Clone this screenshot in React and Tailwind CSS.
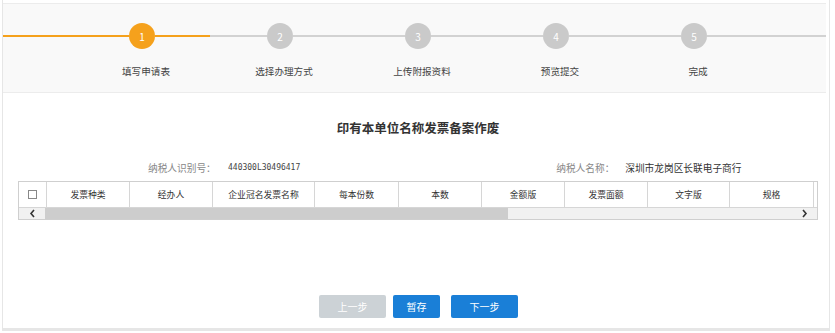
import React from "react";

const F = { fontFamily: '"Noto Sans CJK SC", "Noto Sans", sans-serif' };

function Circle({ n, active }) {
  return (
    <div
      className={`w-[26px] h-[26px] rounded-full flex items-center justify-center text-[10px] text-white shrink-0 ${
        active ? "bg-[#f5a11c]" : "bg-[#cacaca]"
      }`}
    >
      {n}
    </div>
  );
}

const cols = [
  { w: "w-[83px]", t: "发票种类" },
  { w: "w-[83px]", t: "经办人" },
  { w: "w-[102px]", t: "企业冠名发票名称" },
  { w: "w-[84px]", t: "每本份数" },
  { w: "w-[83px]", t: "本数" },
  { w: "w-[83px]", t: "金额版" },
  { w: "w-[83px]", t: "发票面额" },
  { w: "w-[82px]", t: "文字版" },
  { w: "w-[84px]", t: "规格" },
];

export default function App() {
  return (
    <div className="w-[835px] h-[333px] bg-white overflow-hidden" style={F}>
      <div className="ml-[2px] w-[828px] h-[331px] border-l border-r border-b-[3px] border-[#e6e6e6] pt-[3px] flex flex-col">
        {/* stepper */}
        <div className="h-[90px] bg-[#f9f9f9] border-t border-b border-[#ececec] mr-[3px] pt-[19px]">
          <div className="flex items-center h-[26px]">
            <div className="h-[2px] w-[126px] bg-[#f5a11c]" />
            <Circle n="1" active />
            <div className="h-[2px] w-[55px] bg-[#f5a11c]" />
            <div className="h-[2px] w-[57px] bg-[#d2d2d2]" />
            <Circle n="2" />
            <div className="h-[2px] w-[112px] bg-[#d2d2d2]" />
            <Circle n="3" />
            <div className="h-[2px] w-[112px] bg-[#d2d2d2]" />
            <Circle n="4" />
            <div className="h-[2px] w-[112px] bg-[#d2d2d2]" />
            <Circle n="5" />
            <div className="h-[2px] flex-1 bg-[#d2d2d2]" />
          </div>
          <div className="flex pl-[74px] mt-[15px] text-[9.6px] text-[#444] leading-[14px]">
            {["填写申请表", "选择办理方式", "上传附报资料", "预览提交", "完成"].map((s) => (
              <div key={s} className="w-[138px] text-center">
                {s}
              </div>
            ))}
          </div>
        </div>

        {/* body */}
        <div className="flex-1 flex flex-col">
          <div className="mt-[27px] text-center text-[12.5px] font-bold text-[#333] leading-[16px] pl-[4px]">
            印有本单位名称发票备案作废
          </div>
          <div className="mt-[25px] flex items-center h-[14px] text-[9.7px] leading-[14px]">
            <div className="ml-[145px] w-[80px] text-[#888]">纳税人识别号：</div>
            <div className="text-[#444] text-[8px]" style={{ fontFamily: '"DejaVu Sans Mono", monospace' }}>
              440300L30496417
            </div>
            <div className="ml-[256px] w-[69px] text-[#888]">纳税人名称：</div>
            <div className="text-[#333]">深圳市龙岗区长联电子商行</div>
          </div>

          {/* table */}
          <div className="mt-[6px] ml-[15px] w-[800px] border border-[#cfcfcf]">
            <div className="flex h-[25px] text-[8.8px] text-[#333] bg-white">
              <div className="w-[28px] border-r border-[#d6d6d6] flex items-center justify-center">
                <div className="w-[9px] h-[9px] border border-[#888] bg-white" />
              </div>
              {cols.map((c) => (
                <div key={c.t} className={`${c.w} border-r border-[#d6d6d6] flex items-center justify-center`}>
                  {c.t}
                </div>
              ))}
              <div className="flex-1" />
            </div>
            <div className="flex h-[12px] border-t border-[#d6d6d6] bg-[#f1f1f1] items-center">
              <div className="w-[26px] h-full flex items-center justify-center">
                <svg width="7" height="9" viewBox="0 0 7 9">
                  <path d="M5 1 L2 4.5 L5 8" stroke="#333" strokeWidth="1.6" fill="none" />
                </svg>
              </div>
              <div className="w-[463px] h-full bg-[#cdcdcd]" />
              <div className="flex-1" />
              <div className="w-[26px] h-full flex items-center justify-center">
                <svg width="7" height="9" viewBox="0 0 7 9">
                  <path d="M2 1 L5 4.5 L2 8" stroke="#333" strokeWidth="1.6" fill="none" />
                </svg>
              </div>
            </div>
          </div>

          {/* buttons */}
          <div className="mt-[75px] flex ml-[316px] gap-[7px] text-[10px] text-white">
            <div className="w-[67px] h-[23px] rounded-[2px] bg-[#ccd2d6] flex items-center justify-center">上一步</div>
            <div className="w-[47px] h-[23px] rounded-[2px] bg-[#1a7fd7] flex items-center justify-center">暂存</div>
            <div className="w-[67px] h-[23px] rounded-[2px] bg-[#1a7fd7] flex items-center justify-center ml-[4px]">下一步</div>
          </div>
        </div>
      </div>
    </div>
  );
}
